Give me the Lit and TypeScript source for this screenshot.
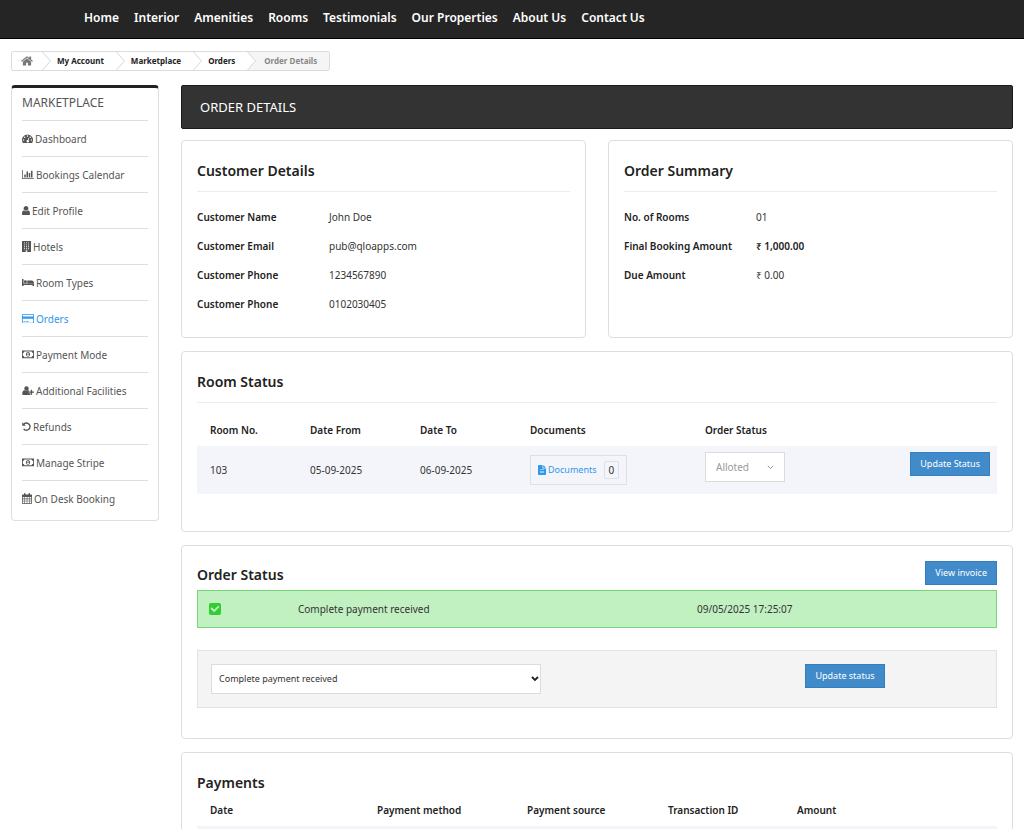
import { LitElement, html, css, svg, SVGTemplateResult, TemplateResult } from "lit";
import { customElement } from "lit/decorators.js";

interface Icon {
  width: number;
  box: string;
  art: SVGTemplateResult;
}

const ICONS: Record<string, Icon> = {
  home: {
    width: 12,
    box: "60 200 1674 1300",
    art: svg`<path d="M1472 992v480q0 26-19 45t-45 19h-384v-384h-256v384h-384q-26 0-45-19t-19-45v-480q0-1 .5-3t.5-3l575-474 575 474q1 2 1 6zm223-69l-62 74q-8 9-21 11h-3q-13 0-21-7l-692-577-692 577q-12 8-24 7-13-2-21-11l-62-74q-8-10-7-23.500t11-21.500l719-599q32-26 76-26t76 26l244 204v-195q0-14 9-23t23-9h192q14 0 23 9t9 23v408l219 182q10 8 11 21.500t-7 23.500z"/>`,
  },
  dashboard: {
    width: 11,
    box: "0 0 22 18",
    art: svg`<path fill-rule="evenodd" d="M11 1a11 11 0 0 0-9.300 16.900h18.600A11 11 0 0 0 11 1zM3.200 10.500a1.500 1.500 0 1 0 0 3 1.500 1.500 0 0 0 0-3zM5.500 5a1.500 1.500 0 1 0 0 3 1.500 1.500 0 0 0 0-3zM11 2.600a1.500 1.500 0 1 0 0 3 1.500 1.500 0 0 0 0-3zM16.500 5a1.500 1.500 0 1 0 0 3 1.500 1.500 0 0 0 0-3zM18.800 10.500a1.500 1.500 0 1 0 0 3 1.500 1.500 0 0 0 0-3zM13.200 7.400l-1.600 4.700a2.400 2.400 0 1 0 1.400.5l1.500-4.800z"/>`,
  },
  chart: {
    width: 12,
    box: "0 128 2048 1536",
    art: svg`<path d="M640 896v512h-256v-512h256zm384-512v1024h-256v-1024h256zm1024 1152v128h-2048v-1536h128v1408h1920zm-640-896v768h-256v-768h256zm384-384v1152h-256v-1152h256z"/>`,
  },
  user: {
    width: 8,
    box: "256 128 1280 1536",
    art: svg`<path d="M1536 1399q0 109-62.500 187t-150.500 78h-854q-88 0-150.500-78t-62.500-187q0-85 8.500-160.500t31.500-152 58.500-131 94-89 134.500-34.500q131 128 313 128t313-128q76 0 134.500 34.500t94 89 58.500 131 31.500 152 8.500 160.500zm-256-887q0 159-112.500 271.500t-271.500 112.500-271.500-112.500-112.500-271.500 112.500-271.500 271.500-112.500 271.500 112.500 112.500 271.500z"/>`,
  },
  building: {
    width: 9,
    box: "0 0 16 20",
    art: svg`<path fill-rule="evenodd" d="M0 0h16v20H0zM3.500 2.500v1.500h1.800v-1.500zm3.600 0v1.500h1.800v-1.500zm3.600 0v1.500h1.800v-1.500zM3.500 6v1.500h1.800V6zm3.600 0v1.500h1.800V6zm3.600 0v1.500h1.800V6zM3.500 9.500V11h1.800V9.500zm3.600 0V11h1.800V9.500zm3.600 0V11h1.800V9.500zM3.500 13v1.500h1.800V13zm3.600 0v1.500h1.800V13zm3.600 0v1.500h1.800V13zM6.500 16.500v2.500h3v-2.500z"/>`,
  },
  bed: {
    width: 12,
    box: "0 256 2048 1216",
    art: svg`<path d="M256 1024h1728q26 0 45 19t19 45v384h-256v-192h-1536v192h-256v-1152q0-26 19-45t45-19h128q26 0 45 19t19 45v704zm576-320q0-106-75-181t-181-75-181 75-75 181 75 181 181 75 181-75 75-181zm1216 256v-64q0-159-112.500-271.500t-271.500-112.500h-704q-26 0-45 19t-19 45v384h1152z"/>`,
  },
  card: {
    width: 12,
    box: "0 128 1920 1536",
    art: svg`<path d="M1760 128q66 0 113 47t47 113v1216q0 66-47 113t-113 47h-1600q-66 0-113-47t-47-113v-1216q0-66 47-113t113-47h1600zm-1600 128q-13 0-22.500 9.500t-9.500 22.500v224h1664v-224q0-13-9.500-22.500t-22.500-9.500h-1600zm1600 1280q13 0 22.500-9.500t9.500-22.500v-608h-1664v608q0 13 9.500 22.500t22.500 9.500h1600zm-1504-128v-128h256v128h-256zm384 0v-128h384v128h-384z"/>`,
  },
  money: {
    width: 12,
    box: "0 0 22 16",
    art: svg`<path fill-rule="evenodd" d="M0 1h22v14H0zM4.500 2.600A3.500 3.500 0 0 1 1.600 5.500v5a3.500 3.500 0 0 1 2.900 2.900h13a3.500 3.500 0 0 1 2.900-2.900v-5a3.500 3.500 0 0 1-2.900-2.900zM11 3.700c2.400 0 3.800 1.900 3.800 4.300s-1.400 4.300-3.800 4.300S7.200 10.400 7.200 8 8.600 3.700 11 3.700zM10.400 5.200L8.800 6.700l.8.900.7-.5v2.600H9v1.200h4V9.700h-1.200V5.200z"/>`,
  },
  userPlus: {
    width: 12,
    box: "0 0 24 18",
    art: svg`<path d="M9 9.500a4.500 4.500 0 1 0 0-9 4.500 4.500 0 0 0 0 9zM12.700 8.700A6 6 0 0 1 9 10 6 6 0 0 1 5.300 8.700C2 8.700.5 12 .5 15.300c0 1.600 1 2.500 2.500 2.500h12c.7 0 1.200-.2 1.600-.5v-2.600h-3v-4h1.200c-.6-1.200-1.300-2-2.100-2zM17.500 7.500h2.700V11H24v2.700h-3.800v3.600h-2.700v-3.600h-3.300V11h3.300z"/>`,
  },
  undo: {
    width: 9,
    box: "0 0 18 18",
    art: svg`<path d="M.5.5l2.300 2.300A8.700 8.700 0 1 1 2.200 14.900l2.300-2A5.600 5.600 0 1 0 5.100 5.100L7.600 7.600H.5z"/>`,
  },
  calendar: {
    width: 10,
    box: "0 0 20 22",
    art: svg`<path fill-rule="evenodd" d="M4 3V1.500Q4 0 5.500 0T7 1.500V3h6V1.500Q13 0 14.500 0T16 1.500V3h2.500Q20 3 20 4.500v16q0 1.500-1.500 1.500h-17Q0 22 0 20.500v-16Q0 3 1.500 3zM1.500 8v3.200h3.400V8zm4.500 0v3.200h3.500V8zm4.600 0v3.200H14V8zm4.500 0v3.200h3.400V8zM1.500 12.300v3.200h3.400v-3.200zm4.500 0v3.200h3.500v-3.200zm4.600 0v3.200H14v-3.200zm4.500 0v3.200h3.400v-3.200zM1.500 16.700v3.600h3.400v-3.600zm4.500 0v3.600h3.500v-3.600zm4.600 0v3.600H14v-3.600zm4.500 0v3.600h3.400v-3.600z"/>`,
  },
  file: {
    width: 8,
    box: "0 0 16 20",
    art: svg`<path fill-rule="evenodd" d="M1.500 0H9v5.500Q9 7 10.500 7H16v11.500q0 1.500-1.500 1.500h-13Q0 20 0 18.500v-17Q0 0 1.500 0zM10.500 0L16 5.500h-5.500zM4 9v1.200h8V9zm0 3v1.200h8V12zm0 3v1.200h8V15z"/>`,
  },
  check: {
    width: 12,
    box: "0 0 24 24",
    art: svg`<path fill-rule="evenodd" d="M3.500 0h17Q24 0 24 3.500v17q0 3.500-3.500 3.500h-17Q0 24 0 20.500v-17Q0 0 3.500 0zM10.300 18.700L21 8l-2.700-2.700-8 8-4.600-4.600L3 11.400z"/>`,
  },
  chevron: {
    width: 7,
    box: "0 0 7 5",
    art: svg`<path d="M.8.8l2.700 2.700L6.200.8" fill="none" stroke="currentColor" stroke-width="1"/>`,
  },
  chevronBold: {
    width: 8,
    box: "0 0 8 6",
    art: svg`<path d="M1 1l3 3 3-3" fill="none" stroke="currentColor" stroke-width="1.800"/>`,
  },
};

const icon = (name: string): TemplateResult => {
  const { width, box, art } = ICONS[name];
  return html`<svg class="icon" width=${width} viewBox=${box} aria-hidden="true">${art}</svg>`;
};

const NAV = ["Home", "Interior", "Amenities", "Rooms", "Testimonials", "Our Properties", "About Us", "Contact Us"];

const MENU: [string, string][] = [
  ["dashboard", "Dashboard"],
  ["chart", "Bookings Calendar"],
  ["user", "Edit Profile"],
  ["building", "Hotels"],
  ["bed", "Room Types"],
  ["card", "Orders"],
  ["money", "Payment Mode"],
  ["userPlus", "Additional Facilities"],
  ["undo", "Refunds"],
  ["money", "Manage Stripe"],
  ["calendar", "On Desk Booking"],
];

const CUSTOMER = [
  ["Customer Name", "John Doe"],
  ["Customer Email", "pub@qloapps.com"],
  ["Customer Phone", "1234567890"],
  ["Customer Phone", "0102030405"],
];

@customElement("app-root")
export class AppRoot extends LitElement {
  static styles = css`
    :host {
      display: block;
      background: #fff;
      color: #333;
      font: 10px/20px "Noto Sans", "Open Sans", sans-serif;
    }
    * { box-sizing: border-box; }
    a { color: inherit; text-decoration: none; }
    ul, dl, dd, h1, h2 { margin: 0; padding: 0; }
    ul { list-style: none; }
    .icon { display: block; flex: none; fill: currentColor; }

    .topbar {
      background: #252525;
      border-bottom: 1px solid #000;
      padding: 6px 84px 8px;
    }
    .nav { display: flex; gap: 15px; color: #fff; font-size: 12px; line-height: 24px; font-weight: 600; white-space: nowrap; }

    .page { padding: 12px 11px; }
    .crumbs {
      display: inline-flex;
      height: 20px;
      border: 1px solid #dcdcdc;
      border-radius: 2px;
      overflow: hidden;
      font-size: 8px;
      line-height: 18px;
      font-weight: 700;
      vertical-align: top;
      white-space: nowrap;
    }
    .crumb { display: flex; align-items: center; color: #222; }
    .crumb a { padding: 0 12px 0 6px; }
    .crumb .home { padding: 0 9px; color: #777; }
    .crumb.current { padding: 0 12px 0 8px; background: #f5f5f5; color: #888; }
    .arrow { display: block; width: 9px; height: 18px; fill: #fff; stroke: #d6d6d6; }

    .layout { display: grid; grid-template-columns: 148px minmax(0, 1fr); gap: 22px; align-items: start; margin-top: 14px; }

    .side {
      border: 1px solid #dfdfdf;
      border-top: 3px solid #222;
      border-radius: 4px;
      padding: 0 10px 3px;
      color: #555;
    }
    .side-title { padding-bottom: 2px; border-bottom: 1px solid #dedede; font-size: 12px; line-height: 30px; font-weight: 400; }
    .menu-link { display: flex; align-items: center; gap: 2px; height: 36px; border-bottom: 1px solid #dedede; white-space: nowrap; }
    li:last-child > .menu-link { border-bottom-color: transparent; }
    .menu-link.active { color: #2e97ee; }

    .main { display: grid; gap: 13px; }
    .banner { margin-bottom: -2px; padding: 0 18px; background: #333; border: 1px solid #1a1a1a; border-radius: 2px; color: #fff; font-size: 13px; line-height: 42px; font-weight: 400; }
    .pair { display: grid; grid-template-columns: 1fr 1fr; gap: 22px; }
    .card { padding: 20px 15px 18px; border: 1px solid #dedede; border-radius: 4px; }
    .card-title { font-size: 14px; line-height: 20px; font-weight: 600; color: #222; }
    .ruled { padding-bottom: 10px; border-bottom: 1px solid #ececec; }
    .facts { padding-top: 11px; }
    .fact { display: grid; grid-template-columns: 132px 1fr; line-height: 29px; }
    .fact dt, .strong { font-weight: 600; color: #222; }

    table { width: 100%; border-collapse: separate; border-spacing: 0; table-layout: fixed; }
    th, td { padding: 0 0 0 13px; text-align: left; white-space: nowrap; }
    th { height: 33px; font-weight: 600; color: #222; }
    .rooms { margin: 10px 0 19px; }
    .rooms td { height: 48px; background: #f4f5fa; }
    .rooms .top { padding-top: 6px; vertical-align: top; }
    .rooms .action { padding-right: 7px; text-align: right; }
    .w-167 { width: 167px; } .w-150 { width: 150px; } .w-141 { width: 141px; } .w-129 { width: 129px; }
    .w-100 { width: 100px; } .w-110 { width: 110px; } .w-175 { width: 175px; } .w-399 { width: 399px; }

    button { margin: 0; font: inherit; cursor: pointer; }
    .primary { display: inline-block; height: 24px; padding: 0 9px; border: 1px solid #357ebd; background: #428bca; color: #fff; font-size: 9px; line-height: 22px; vertical-align: top; }
    .docs { display: inline-flex; align-items: center; gap: 2px; height: 30px; padding: 0 7px; border: 1px solid #dfe0e5; background: transparent; color: #2e97ee; font-size: 9px; vertical-align: middle; }
    .count { margin-left: 5px; padding: 0 4px; border: 1px solid #dfe0e5; border-radius: 2px; color: #333; font-size: 10px; line-height: 16px; }

    .select { display: inline-grid; align-items: center; vertical-align: top; }
    .select select { grid-area: 1 / 1; width: 100%; height: 30px; margin: 0; appearance: none; border: 1px solid #dcdcdc; border-radius: 0; background: #fff; font: inherit; opacity: 1; }
    .select .icon { grid-area: 1 / 1; justify-self: end; pointer-events: none; }
    .allot { width: 80px; color: #999; }
    .allot select { padding: 0 10px; color: #999; }
    .allot .icon { margin-right: 11px; }
    .status { width: 330px; max-width: 100%; color: #222; font-size: 9px; }
    .status select { padding: 0 7px; color: #333; }
    .status .icon { margin-right: 2px; }

    .card.compact { padding-top: 15px; }
    .head { display: flex; justify-content: space-between; align-items: flex-end; padding-bottom: 5px; }
    .history { border: 1px solid #76d67a; background: #c1f0c1; }
    .history td { height: 36px; padding-left: 0; }
    .history td:first-child { padding-left: 11px; color: #32cd32; }
    .update { display: grid; grid-template-columns: 77fr 23fr; margin: 22px 0 12px; padding: 13px; border: 1px solid #e2e2e2; background: #f4f4f4; }
    .payments td { height: 40px; background: #f4f5fa; }
  `;

  private crumb(label: TemplateResult | string, beforeLast = false) {
    return html`<li class="crumb">
      <a href="#" class=${typeof label === "string" ? "" : "home"} aria-label=${typeof label === "string" ? label : "Home"}>${label}</a>
      <svg class="arrow" viewBox="0 0 9 18" aria-hidden="true">
        ${beforeLast ? svg`<rect width="9" height="18" fill="#f5f5f5" stroke="none"/>` : ""}
        <path d="M0 -0.500L8.500 9L0 18.500"/>
      </svg>
    </li>`;
  }

  private facts(rows: string[][]) {
    return html`<dl class="facts">
      ${rows.map(([k, v, strong]) => html`<div class="fact"><dt>${k}</dt><dd class=${strong ?? ""}>${v}</dd></div>`)}
    </dl>`;
  }

  render() {
    return html`
      <header class="topbar">
        <nav class="nav">${NAV.map((n) => html`<a href="#">${n}</a>`)}</nav>
      </header>
      <div class="page">
        <ul class="crumbs">
          ${this.crumb(icon("home"))} ${this.crumb("My Account")} ${this.crumb("Marketplace")} ${this.crumb("Orders", true)}
          <li class="crumb current">Order Details</li>
        </ul>
        <div class="layout">
          <aside class="side">
            <h2 class="side-title">MARKETPLACE</h2>
            <ul>
              ${MENU.map(([i, label]) => html`<li><a href="#" class="menu-link ${label === "Orders" ? "active" : ""}">${icon(i)}${label}</a></li>`)}
            </ul>
          </aside>
          <main class="main">
            <h1 class="banner">ORDER DETAILS</h1>
            <div class="pair">
              <section class="card">
                <h2 class="card-title ruled">Customer Details</h2>
                ${this.facts(CUSTOMER)}
              </section>
              <section class="card">
                <h2 class="card-title ruled">Order Summary</h2>
                ${this.facts([["No. of Rooms", "01"], ["Final Booking Amount", "₹ 1,000.00", "strong"], ["Due Amount", "₹ 0.00"]])}
              </section>
            </div>
            <section class="card">
              <h2 class="card-title ruled">Room Status</h2>
              <table class="rooms">
                <thead>
                  <tr>
                    <th class="w-100">Room No.</th>
                    <th class="w-110">Date From</th>
                    <th class="w-110">Date To</th>
                    <th class="w-175">Documents</th>
                    <th>Order Status</th>
                    <th></th>
                  </tr>
                </thead>
                <tbody>
                  <tr>
                    <td>103</td>
                    <td>05-09-2025</td>
                    <td>06-09-2025</td>
                    <td><button class="docs" type="button">${icon("file")}Documents<span class="count">0</span></button></td>
                    <td class="top">
                      <span class="select allot">
                        <select disabled aria-label="Room order status"><option>Alloted</option></select>
                        ${icon("chevron")}
                      </span>
                    </td>
                    <td class="top action"><button class="primary" type="button">Update Status</button></td>
                  </tr>
                </tbody>
              </table>
            </section>
            <section class="card compact">
              <div class="head">
                <h2 class="card-title">Order Status</h2>
                <button class="primary" type="button">View invoice</button>
              </div>
              <table class="history">
                <tbody>
                  <tr>
                    <td class="w-100">${icon("check")}</td>
                    <td class="w-399">Complete payment received</td>
                    <td>09/05/2025 17:25:07</td>
                  </tr>
                </tbody>
              </table>
              <form class="update">
                <div>
                  <span class="select status">
                    <select aria-label="New order status"><option>Complete payment received</option></select>
                    ${icon("chevronBold")}
                  </span>
                </div>
                <div><button class="primary" type="button">Update status</button></div>
              </form>
            </section>
            <section class="card">
              <h2 class="card-title">Payments</h2>
              <table class="payments">
                <thead>
                  <tr>
                    <th class="w-167">Date</th>
                    <th class="w-150">Payment method</th>
                    <th class="w-141">Payment source</th>
                    <th class="w-129">Transaction ID</th>
                    <th>Amount</th>
                  </tr>
                </thead>
                <tbody>
                  <tr><td></td><td></td><td></td><td></td><td></td></tr>
                </tbody>
              </table>
            </section>
          </main>
        </div>
      </div>
    `;
  }
}
